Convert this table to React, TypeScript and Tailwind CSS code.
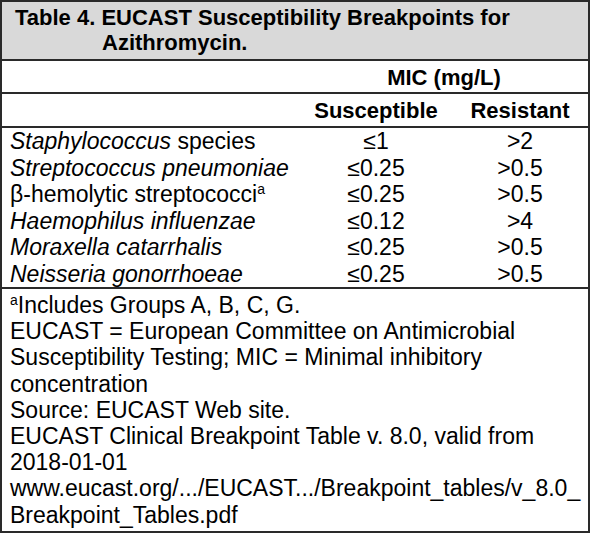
import React from 'react';

type Row = {
  name: React.ReactNode;
  sus: string;
  res: string;
};

const Sup = ({ children }: { children: React.ReactNode }) => (
  <span className="text-[14px] leading-none align-[8px]">{children}</span>
);

const rows: Row[] = [
  { name: <><i>Staphylococcus</i> species</>, sus: '≤1', res: '>2' },
  { name: <i>Streptococcus pneumoniae</i>, sus: '≤0.25', res: '>0.5' },
  { name: <>β-hemolytic streptococci<Sup>a</Sup></>, sus: '≤0.25', res: '>0.5' },
  { name: <i>Haemophilus influenzae</i>, sus: '≤0.12', res: '>4' },
  { name: <i>Moraxella catarrhalis</i>, sus: '≤0.25', res: '>0.5' },
  { name: <i>Neisseria gonorrhoeae</i>, sus: '≤0.25', res: '>0.5' },
];

// footnote lines, wrapped like the source
const notes = [
  'EUCAST = European Committee on Antimicrobial',
  'Susceptibility Testing; MIC = Minimal inhibitory',
  'concentration',
  'Source: EUCAST Web site.',
  'EUCAST Clinical Breakpoint Table v. 8.0, valid from',
  '2018-01-01',
  'www.eucast.org/.../EUCAST.../Breakpoint_tables/v_8.0_',
  'Breakpoint_Tables.pdf',
];

const App: React.FC = () => {
  return (
    <div className="min-h-screen bg-white font-['Liberation_Sans',Arial,sans-serif] text-[23px] text-black">
      <div className="w-[590px] border-2 border-[#2a2a2a]">
        {/* Title */}
        <div className="bg-[#d9d9d9] border-b-2 border-[#2a2a2a] h-[59px] pt-[3px] pl-[100px] -indent-[87px] font-bold text-[22px] leading-[25px]">
          Table 4. EUCAST Susceptibility Breakpoints for Azithromycin.
        </div>

        {/* Column headers */}
        <div className="grid grid-cols-[298px_152px_136px] h-[33px] items-center border-b-2 border-[#2a2a2a] font-bold text-[22px]">
          <div />
          <div className="col-span-2 text-center">MIC (mg/L)</div>
        </div>
        <div className="grid grid-cols-[298px_152px_136px] h-[34px] items-center border-b-2 border-[#2a2a2a] font-bold text-[22px]">
          <div />
          <div className="text-center">Susceptible</div>
          <div className="text-center">Resistant</div>
        </div>

        {/* Data */}
        <div className="border-b-2 border-[#2a2a2a]">
          {rows.map((r, i) => (
            <div key={i} className="grid grid-cols-[298px_152px_136px] h-[26.5px] leading-[26.5px]">
              <div className="pl-2">{r.name}</div>
              <div className="text-center">{r.sus}</div>
              <div className="text-center">{r.res}</div>
            </div>
          ))}
        </div>

        {/* Footnotes */}
        <div className="pl-2 pt-[3px] pb-[3px] leading-[26.2px]">
          <div>
            <Sup>a</Sup>Includes Groups A, B, C, G.
          </div>
          {notes.map((n, i) => (
            <div key={i}>{n}</div>
          ))}
        </div>
      </div>
    </div>
  );
};

export default App;
